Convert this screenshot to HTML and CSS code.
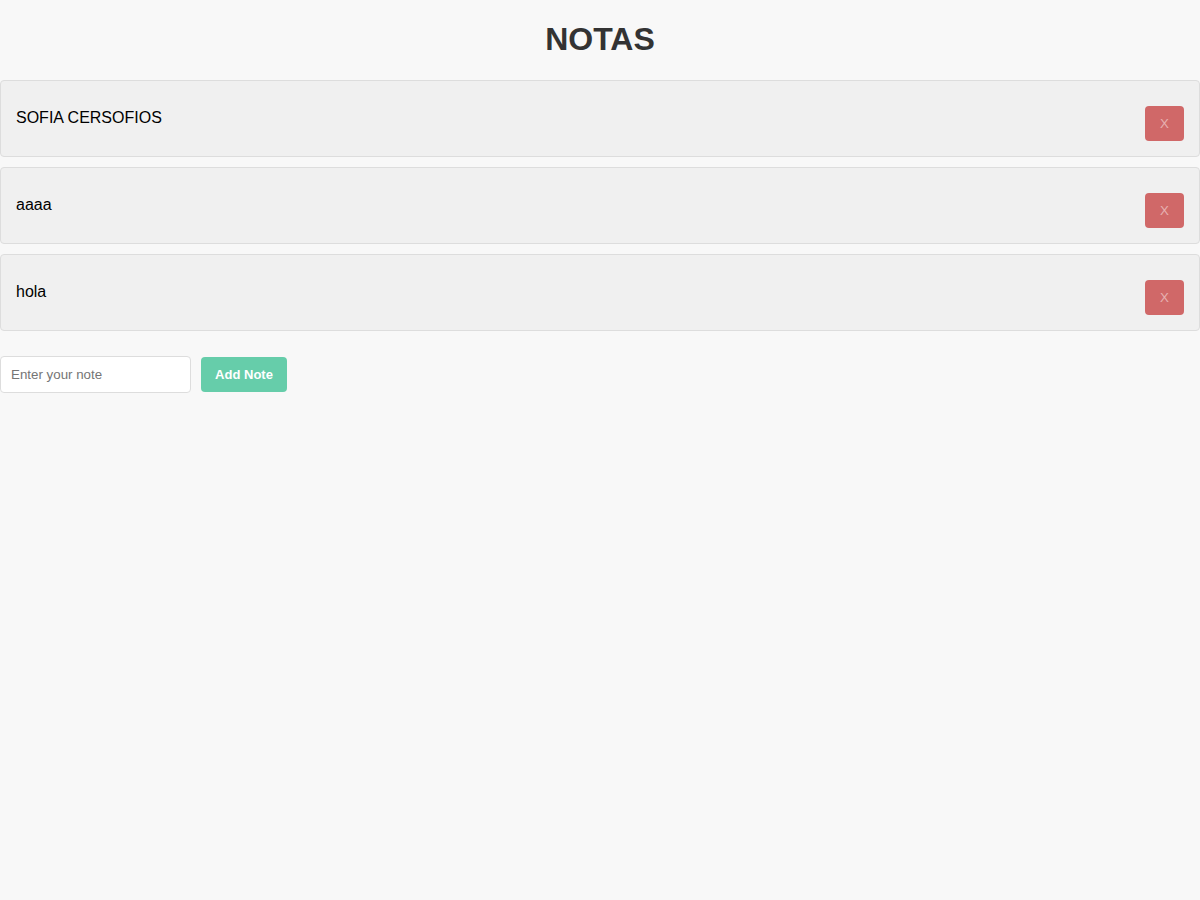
FILE: index.html
```html
<!DOCTYPE html>
<html lang="es">
<head>
<meta charset="utf-8">
<title>Notas</title>
<link rel="stylesheet" href="styles.css">
</head>
<body>
  <h1 class="title">NOTAS</h1>
  <div class="notes">
    <div class="note">
      <span class="note-text">SOFIA CERSOFIOS</span>
      <button class="delete">X</button>
    </div>
    <div class="note">
      <span class="note-text">aaaa</span>
      <button class="delete">X</button>
    </div>
    <div class="note">
      <span class="note-text">hola</span>
      <button class="delete">X</button>
    </div>
  </div>
  <div class="form">
    <input class="note-input" type="text" placeholder="Enter your note">
    <button class="add">Add Note</button>
  </div>
</body>
</html>
```

FILE: styles.css
```css
html, body {
  margin: 0;
  padding: 0;
  background: #f8f8f8;
  font-family: "Liberation Sans", Arial, sans-serif;
}

.title {
  font-size: 32px;
  font-weight: bold;
  color: #333;
  text-align: center;
  margin: 21px 0 22px;
  line-height: 37px;
}

.notes {
  display: flex;
  flex-direction: column;
  gap: 10px;
}

.note {
  display: flex;
  justify-content: space-between;
  align-items: flex-start;
  background: #f0f0f0;
  border: 1px solid #dddddd;
  border-radius: 4px;
  padding: 15px;
  height: 45px;
}

.note-text {
  margin-top: 13px;
  font-size: 16px;
  line-height: 18px;
  color: #000;
}

.delete {
  margin-top: 10px;
  width: 39px;
  height: 35px;
  background: #d06868;
  color: #e6b0b0;
  border: none;
  border-radius: 4px;
  font-family: "Liberation Sans", Arial, sans-serif;
  font-size: 13.33px;
  padding: 0;
}

.form {
  display: flex;
  align-items: center;
  gap: 10px;
  margin-top: 25px;
}

.note-input {
  box-sizing: border-box;
  width: 191px;
  height: 37px;
  padding: 0 10px;
  border: 1px solid #dddddd;
  border-radius: 4px;
  background: #fff;
  font-family: "Liberation Sans", Arial, sans-serif;
  font-size: 13.33px;
  color: #333;
}

.note-input::placeholder {
  color: #757575;
}

.add {
  width: 86px;
  height: 35px;
  background: #66cdaa;
  color: #fff;
  border: none;
  border-radius: 4px;
  font-family: "Liberation Sans", Arial, sans-serif;
  font-size: 13px;
  font-weight: bold;
  padding: 0;
}
```
